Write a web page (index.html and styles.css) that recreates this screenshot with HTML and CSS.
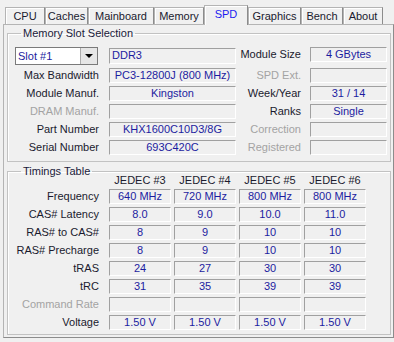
FILE: index.html
```html
<!DOCTYPE html>
<html lang="en">
<head>
  <meta charset="UTF-8">
  <title>CPU-Z SPD</title>
  <link rel="stylesheet" href="styles.css">
</head>
<body>
  <div class="tabs">
    <span class="tab tab-cpu">CPU</span>
    <span class="tab tab-caches">Caches</span>
    <span class="tab tab-mainboard">Mainboard</span>
    <span class="tab tab-memory">Memory</span>
    <span class="tab tab-spd active">SPD</span>
    <span class="tab tab-graphics">Graphics</span>
    <span class="tab tab-bench">Bench</span>
    <span class="tab tab-about">About</span>
  </div>

  <div class="pane">
    <fieldset class="group slot-group">
      <legend>Memory Slot Selection</legend>
      <div class="slot-grid">
        <div class="select">
          <span class="select-text">Slot #1</span>
          <span class="select-btn"><span class="arrow"></span></span>
        </div>
        <div class="field left">DDR3</div>
        <div class="label">Module Size</div>
        <div class="field">4 GBytes</div>

        <div class="label">Max Bandwidth</div>
        <div class="field">PC3-12800J (800 MHz)</div>
        <div class="label off">SPD Ext.</div>
        <div class="field"></div>

        <div class="label">Module Manuf.</div>
        <div class="field">Kingston</div>
        <div class="label">Week/Year</div>
        <div class="field">31 / 14</div>

        <div class="label off">DRAM Manuf.</div>
        <div class="field"></div>
        <div class="label">Ranks</div>
        <div class="field">Single</div>

        <div class="label">Part Number</div>
        <div class="field">KHX1600C10D3/8G</div>
        <div class="label off">Correction</div>
        <div class="field"></div>

        <div class="label">Serial Number</div>
        <div class="field">693C420C</div>
        <div class="label off">Registered</div>
        <div class="field"></div>
      </div>
    </fieldset>

    <fieldset class="group timing-group">
      <legend>Timings Table</legend>
      <div class="timing-grid">
        <div></div>
        <div class="head">JEDEC #3</div>
        <div class="head">JEDEC #4</div>
        <div class="head">JEDEC #5</div>
        <div class="head">JEDEC #6</div>

        <div class="label">Frequency</div>
        <div class="field">640 MHz</div>
        <div class="field">720 MHz</div>
        <div class="field">800 MHz</div>
        <div class="field">800 MHz</div>

        <div class="label">CAS# Latency</div>
        <div class="field">8.0</div>
        <div class="field">9.0</div>
        <div class="field">10.0</div>
        <div class="field">11.0</div>

        <div class="label">RAS# to CAS#</div>
        <div class="field">8</div>
        <div class="field">9</div>
        <div class="field">10</div>
        <div class="field">10</div>

        <div class="label">RAS# Precharge</div>
        <div class="field">8</div>
        <div class="field">9</div>
        <div class="field">10</div>
        <div class="field">10</div>

        <div class="label">tRAS</div>
        <div class="field">24</div>
        <div class="field">27</div>
        <div class="field">30</div>
        <div class="field">30</div>

        <div class="label">tRC</div>
        <div class="field">31</div>
        <div class="field">35</div>
        <div class="field">39</div>
        <div class="field">39</div>

        <div class="label off">Command Rate</div>
        <div class="field"></div>
        <div class="field"></div>
        <div class="field"></div>
        <div class="field"></div>

        <div class="label">Voltage</div>
        <div class="field">1.50 V</div>
        <div class="field">1.50 V</div>
        <div class="field">1.50 V</div>
        <div class="field">1.50 V</div>
      </div>
    </fieldset>
  </div>
</body>
</html>
```

FILE: styles.css
```css
body {
  margin: 0;
  background: #f0f0f0;
  font-family: 'Liberation Sans', Arial, sans-serif;
  font-size: 11px;
  color: #1a1a2e;
  width: 394px;
  height: 342px;
  overflow: hidden;
}

/* tab strip */
.tabs {
  display: flex;
  align-items: flex-end;
  height: 24px;
  padding-left: 5px;
  position: relative;
  z-index: 1;
}
.tab {
  box-sizing: border-box;
  height: 17px;
  line-height: 16px;
  text-align: center;
  border: 1px solid #b4b4b4;
  border-bottom: none;
  border-right-color: #8c8c8c;
  box-shadow: inset 1px 1px 0 #fff;
  background: #f0f0f0;
}
.tab-cpu { width: 40px; }
.tab-caches { width: 43px; }
.tab-mainboard { width: 66px; }
.tab-memory { width: 50px; }
.tab-spd { width: 44px; }
.tab-graphics { width: 53px; }
.tab-bench { width: 42px; }
.tab-about { width: 40px; }
.tab.active {
  height: 20px;
  margin-bottom: -1px;
  line-height: 17px;
  color: #1c1cf0;
}

/* main pane */
.pane {
  box-sizing: border-box;
  width: 391px;
  height: 314px;
  margin-left: 3px;
  padding: 1px 2px 0 3px;
  border: 1px solid #b4b4b4;
  border-right-color: #8c8c8c;
  border-bottom-color: #8c8c8c;
}

.group {
  margin: 0;
  padding: 7px 6px 6px 7px;
  border: 1px solid #c2c2c2;
  box-shadow: inset 1px 1px 0 #fff;
  min-width: 0;
}
.group legend {
  margin-left: 6px;
  padding: 0 2px;
  line-height: 14px;
  color: #1a1a3a;
}
.timing-group {
  margin-top: 2px;
  padding-top: 0;
  padding-bottom: 4px;
}

.slot-grid {
  display: grid;
  grid-template-columns: 94px 127px 74px 77px;
  grid-template-rows: 18px repeat(5, 15px);
  row-gap: 3px;
}
.slot-grid .label { padding-right: 10px; }
.slot-grid .label:nth-child(4n+3) { padding-right: 9px; }

.timing-grid {
  display: grid;
  grid-template-columns: 91px repeat(4, 62px);
  grid-template-rows: 12px repeat(8, 15px);
  column-gap: 3px;
  row-gap: 3px;
  margin-top: -4px;
}
.timing-grid .label { padding-right: 7px; }

.label {
  text-align: right;
  line-height: 15px;
  white-space: nowrap;
}
.label.off { color: #a3a3a3; }

.head {
  text-align: center;
  line-height: 12px;
  color: #1a1a2e;
}

.field {
  box-sizing: border-box;
  height: 15px;
  line-height: 13px;
  text-align: center;
  color: #1c1ca0;
  border: 1px solid;
  border-color: #a0a0a0 #fff #fff #a0a0a0;
  white-space: nowrap;
  overflow: hidden;
}
.field.left {
  text-align: left;
  padding-left: 2px;
  height: 16px;
  margin-top: 1px;
}

/* slot combo box */
.select {
  box-sizing: border-box;
  width: 83px;
  height: 18px;
  display: flex;
  background: #fff;
  border: 1px solid #7a7a7a;
}
.select-text {
  flex: 1;
  padding-left: 2px;
  line-height: 16px;
  color: #1c1ca0;
}
.select-btn {
  box-sizing: border-box;
  width: 17px;
  height: 16px;
  display: flex;
  align-items: center;
  justify-content: center;
  background: #e6e6e6;
  border-left: 1px solid #adadad;
}
.arrow {
  width: 0;
  height: 0;
  border-left: 4px solid transparent;
  border-right: 4px solid transparent;
  border-top: 4px solid #000;
}
```
